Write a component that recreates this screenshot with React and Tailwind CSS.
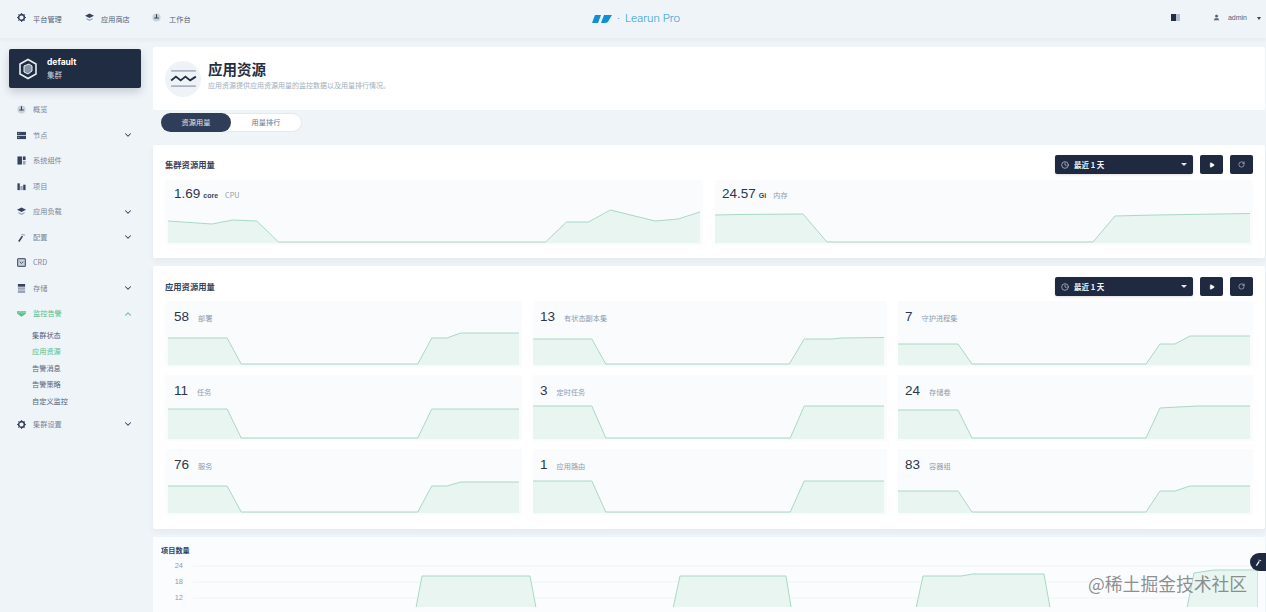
import { ChevronDown, ChevronUp, Clock, Play, RotateCw, User } from 'lucide-react';

const CJK = { fontFamily: '"Noto Sans CJK SC", "Liberation Sans", sans-serif' };
const DARK = '#36435c';

// the product's small duotone icons, 10x10
const Gear = ({ c = DARK }) => (
  <svg viewBox="0 0 10 10" className="w-[9px] h-[9px]" fill="none">
    <circle cx="5" cy="5" r="3.2" stroke={c} strokeWidth="1.8" />
    <path d="M5 0v1.5M5 8.5V10M0 5h1.5M8.5 5H10M1.5 1.5l1 1M7.5 7.5l1 1M8.5 1.5l-1 1M2.5 7.5l-1 1" stroke={c} strokeWidth="1" />
  </svg>
);
const Dial = () => (
  <svg viewBox="0 0 10 10" className="w-[9px] h-[9px]">
    <circle cx="5" cy="5" r="4.5" fill="#c9d1db" />
    <path d="M5 1.5v3.5M2.5 5.5h5" stroke={DARK} strokeWidth="1.2" />
  </svg>
);
const Cap = ({ c = DARK }) => (
  <svg viewBox="0 0 10 10" className="w-[9px] h-[9px]">
    <path d="M5 0.5L10 3 5 5.5 0 3z" fill={c} />
    <path d="M1.5 5.5L5 7.2l3.5-1.7V7L5 9 1.5 7z" fill="#9aa5b5" />
  </svg>
);
const Rows = () => (
  <svg viewBox="0 0 10 10" className="w-[9px] h-[9px]">
    <rect y="1" width="10" height="3.6" fill={DARK} />
    <rect y="5.4" width="10" height="3.6" fill={DARK} />
    <path d="M1.5 2.8h1M1.5 7.2h1" stroke="#fff" strokeWidth="0.8" />
  </svg>
);
const Blocks = () => (
  <svg viewBox="0 0 10 10" className="w-[9px] h-[9px]">
    <rect x="0.5" y="0.5" width="5" height="9" fill={DARK} />
    <rect x="6.5" y="0.5" width="3" height="4" fill={DARK} />
    <rect x="6.5" y="5.5" width="3" height="4" fill="#9aa5b5" />
  </svg>
);
const Bars = () => (
  <svg viewBox="0 0 10 10" className="w-[9px] h-[9px]">
    <rect x="0.5" y="1.5" width="2.6" height="7.5" fill={DARK} />
    <rect x="3.7" y="4.5" width="2.6" height="4.5" fill="#9aa5b5" />
    <rect x="6.9" y="3" width="2.6" height="6" fill={DARK} />
  </svg>
);
const Hammer = ({ c = DARK }) => (
  <svg viewBox="0 0 10 10" className="w-[9px] h-[9px]" fill="none">
    <path d="M6 3.5L2 9.5" stroke={c} strokeWidth="1.8" />
    <path d="M5 1.5l4 1" stroke="#9aa5b5" strokeWidth="1.4" />
  </svg>
);
const Crd = () => (
  <svg viewBox="0 0 10 10" className="w-[9px] h-[9px]" fill="none">
    <rect x="0.7" y="0.7" width="8.6" height="8.6" rx="1" stroke="#566176" strokeWidth="1.4" fill="#c9d1db" />
    <path d="M3 4l2 2 2-2" stroke={DARK} strokeWidth="1" />
  </svg>
);
const Stack = () => (
  <svg viewBox="0 0 10 10" className="w-[9px] h-[9px]">
    <rect x="1" y="0" width="8" height="3" fill={DARK} />
    <rect x="1" y="3.7" width="8" height="2.6" fill="#9aa5b5" />
    <rect x="1" y="7" width="8" height="3" fill="#9aa5b5" />
  </svg>
);
const Pulse = () => (
  <svg viewBox="0 0 10 10" className="w-[9px] h-[9px]">
    <path d="M0 2.5h10v2.5L5 8.5 0 5z" fill="#55bc8a" />
    <path d="M0 4.5h3l1-1.5 1.5 2.5L6.5 4H10" stroke="#c6ead8" strokeWidth="0.6" fill="none" />
  </svg>
);

const NAV = [
  { label: '概览', Icon: Dial },
  { label: '节点', Icon: Rows, arrow: true },
  { label: '系统组件', Icon: Blocks },
  { label: '项目', Icon: Bars },
  { label: '应用负载', Icon: Cap, arrow: true },
  { label: '配置', Icon: Hammer, arrow: true },
  { label: 'CRD', Icon: Crd },
  { label: '存储', Icon: Stack, arrow: true },
];

const SUB = ['集群状态', '应用资源', '告警消息', '告警策略', '自定义监控'];

const TILES = [
  { value: '58', label: '部署', pts: '0,8 59,8 73,34 249,34 263,8 278,8 292,3 350,3' },
  { value: '13', label: '有状态副本集', flush: true, pts: '0,9 59,9 73,34 257,34 272,9 300,9 310,8 352,7.5', vw: 352 },
  { value: '7', label: '守护进程集', flush: true, pts: '0,14 60,14 74,34 248,34 262,14 277,14 292,6 352,6', vw: 352 },
  { value: '11', label: '任务', pts: '0,5 59,5 73,34 249,34 263,5 350,5' },
  { value: '3', label: '定时任务', flush: true, pts: '0,2 59,2 73,34 258,34 272,2 352,2', vw: 352 },
  { value: '24', label: '存储卷', flush: true, pts: '0,6 60,6 74,34 248,34 262,4 280,3 300,2 352,2', vw: 352 },
  { value: '76', label: '服务', pts: '0,8 59,8 73,34 249,34 263,8 278,8 292,4 350,4' },
  { value: '1', label: '应用路由', flush: true, pts: '0,3 59,3 73,34 258,34 272,3 352,3', vw: 352 },
  { value: '83', label: '容器组', flush: true, pts: '0,13 60,13 74,34 248,34 262,13 277,13 292,8 352,8', vw: 352 },
];

function Spark({ pts, vw = 350 }) {
  return (
    <svg viewBox={`0 0 ${vw} 36`} preserveAspectRatio="none" className="w-full h-[36px] block">
      <polygon points={`0,35 ${pts} ${vw},35`} fill="#e9f5f0" />
      <polyline points={pts} fill="none" stroke="#abd8c3" strokeWidth="1" vectorEffect="non-scaling-stroke" />
    </svg>
  );
}

function Toolbar() {
  return (
    <div className="flex items-center gap-[7px] text-white">
      <div className="w-[138px] h-[19px] bg-[#1f2a40] rounded-[2px] flex items-center px-[6px] shadow-sm">
        <Clock className="w-[8px] h-[8px] text-gray-300" />
        <span className="ml-[5px] text-[7.5px] font-bold text-gray-100" style={CJK}>最近 1 天</span>
        <span className="ml-auto w-0 h-0 border-x-[3px] border-x-transparent border-t-[3px] border-t-gray-200" />
      </div>
      <div className="w-[23px] h-[19px] bg-[#1f2a40] rounded-[2px] flex items-center justify-center">
        <Play className="w-[6px] h-[6px] fill-white" />
      </div>
      <div className="w-[23px] h-[19px] bg-[#1f2a40] rounded-[2px] flex items-center justify-center">
        <RotateCw className="w-[7px] h-[7px] text-gray-300" />
      </div>
    </div>
  );
}

function Tile({ value, unit, label, pts, vw, small, flush }) {
  return (
    <div className={`bg-[#f9fbfd] ${flush ? 'pr-[3px]' : 'px-[3px]'} ${small ? 'h-[65px]' : 'h-[66px]'}`}>
      <div className={`flex items-baseline ${flush ? 'pl-[7px]' : 'pl-[6px]'} ${small ? 'h-[28px] pt-[5px]' : 'h-[29px] pt-[7px]'}`}>
        <span className="text-[13.5px] leading-[18px] text-[#2d3749]">{value}</span>
        {unit && <span className="ml-[3px] text-[7px] font-bold text-[#36435c]">{unit}</span>}
        <span className={`${unit ? 'ml-[7px]' : 'ml-[9px]'} text-[7.2px] text-[#8f9bad]`} style={CJK}>{label}</span>
      </div>
      <Spark pts={pts} vw={vw} />
    </div>
  );
}

export default function App() {
  return (
    <div className="relative w-[1266px] h-[612px] overflow-hidden bg-[#eff4f9] text-[#36435c]" style={{ fontFamily: '"Liberation Sans", sans-serif' }}>
      <header className="h-[38px] grid grid-cols-3 items-center bg-[#eff4f9] shadow-[0_2px_4px_rgba(36,46,66,0.05)]">
        <nav className="flex items-center pl-[17px] text-[7.2px] text-[#566176]" style={CJK}>
          <span className="flex items-center gap-[7px] w-[67px]"><span className="-mt-[2px] flex"><Gear /></span>平台管理</span>
          <span className="flex items-center gap-[7px] w-[67px] pl-[1px]"><span className="-mt-[2px] flex"><Cap /></span>应用商店</span>
          <span className="flex items-center gap-[8px] pl-[1px]"><span className="-mt-[2px] flex"><Dial /></span>工作台</span>
        </nav>
        <div className="flex items-center justify-center gap-[5px] pl-[6px]">
          <svg viewBox="0 0 20 8" className="w-[20px] h-[8px]">
            <path d="M3 0h6L6 8H0zM12 0h8l-3 5q-1 3-4 3H9z" fill="#0f8fd6" />
          </svg>
          <span className="text-[9px] leading-none text-[#2a9bd8]">·</span>
          <span className="text-[11.6px] text-[#2a9bd8]" style={{ fontFamily: 'Roboto, sans-serif', fontWeight: 300 }}>Learun Pro</span>
        </div>
        <div className="flex items-center justify-end pr-[5px] text-[7px] text-[#566176]">
          <svg viewBox="0 0 9 7" className="w-[9px] h-[7px] mr-[33px] -mt-[3px]">
            <rect width="5" height="7" fill="#242e42" />
            <rect x="5" width="4" height="7" fill="#b6bfcb" />
          </svg>
          <User className="w-[7px] h-[9px] mr-[8px] -mt-[3px] text-[#566176] fill-[#566176]" />
          <span className="-mt-[2px]">admin</span>
          <span className="ml-[10px] -mt-[2px] w-0 h-0 border-x-[2.5px] border-x-transparent border-t-[3px] border-t-[#36435c]" />
        </div>
      </header>

      <div className="flex">
        <aside className="w-[153px] shrink-0 pt-[11px]">
          <div className="mx-[9px] w-[132px] h-[39px] bg-[#202c42] rounded-[2px] flex items-center pl-[9px] shadow-[0_4px_8px_rgba(36,46,66,0.2)]">
            <svg viewBox="0 0 20 22" className="w-[20px] h-[22px]" fill="none">
              <path d="M10 1.5l8 4.5v10l-8 4.5-8-4.5V6z" stroke="#e8edf3" strokeWidth="1.6" />
              <path d="M6 8l5-2 3 2v5l-4 3-4-2z" fill="#8794a8" stroke="#e8edf3" strokeWidth="1" />
            </svg>
            <div className="ml-[9px]">
              <div className="text-[8.5px] leading-[12px] font-bold text-white" style={{ fontFamily: 'Inter, sans-serif' }}>default</div>
              <div className="text-[7.5px] leading-[13px] text-gray-300" style={CJK}>集群</div>
            </div>
          </div>

          <div className="mt-[9px] text-[7.2px] text-[#7a8598]" style={CJK}>
            {NAV.map(({ label, Icon, arrow }) => (
              <div key={label} className="h-[25.5px] flex items-center pl-[17px] pr-[20px]">
                <Icon />
                <span className="ml-[7px]">{label}</span>
                {arrow && <ChevronDown className="ml-auto w-[10px] h-[10px] text-[#36435c]" strokeWidth={2.5} />}
              </div>
            ))}
            <div className="h-[25.5px] flex items-center pl-[17px] pr-[20px] text-[#55bc8a]">
              <Pulse />
              <span className="ml-[7px]">监控告警</span>
              <ChevronUp className="ml-auto w-[10px] h-[10px]" strokeWidth={2.5} />
            </div>
            <div className="pl-[32px]">
              {SUB.map(s => (
                <div key={s} className={`h-[16.6px] leading-[16px] ${s === '应用资源' ? 'text-[#55bc8a]' : 'text-[#566176]'}`}>{s}</div>
              ))}
            </div>
            <div className="h-[25.5px] mt-[2px] flex items-center pl-[17px] pr-[20px]">
              <Gear />
              <span className="ml-[7px]">集群设置</span>
              <ChevronDown className="ml-auto w-[10px] h-[10px] text-[#36435c]" strokeWidth={2.5} />
            </div>
          </div>
        </aside>

        <main className="flex-1 min-w-0 pt-[9px] pr-[1px]">
          <section className="h-[63px] bg-white rounded-[2px] flex items-center pl-[12px]">
            <div className="w-[36px] h-[36px] rounded-full bg-[#eff3f7] flex items-center justify-center">
              <svg viewBox="0 0 28 20" className="w-[27px] h-[19px]" fill="none">
                <path d="M1 2h26M1 18h26" stroke="#a9b4c3" strokeWidth="2" />
                <path d="M1 12l5-4 5 4 5-4 5 4 6-4" stroke="#242e42" strokeWidth="2" />
              </svg>
            </div>
            <div className="ml-[7px] -mt-[7px]" style={CJK}>
              <h1 className="text-[14.5px] leading-[20px] font-bold text-[#242e42]">应用资源</h1>
              <p className="text-[7px] leading-[12px] text-[#a2adbc]">应用资源提供应用资源用量的监控数据以及用量排行情况。</p>
            </div>
          </section>

          <div className="mt-[3px] ml-[8px] w-[141px] h-[19px] bg-white border border-[#e3e9ef] rounded-full flex items-center text-[7.2px]" style={CJK}>
            <span className="w-[70px] h-[19px] -ml-px bg-[#2f3d58] rounded-full flex items-center justify-center text-gray-200">资源用量</span>
            <span className="flex-1 text-center text-[#6b7688]">用量排行</span>
          </div>

          <section className="mt-[13px] h-[113px] bg-white rounded-[2px] px-[12px] shadow-[0_3px_6px_rgba(36,46,66,0.05)]">
            <div className="h-[35px] pt-[4px] flex items-center justify-between">
              <h2 className="text-[8.3px] font-bold text-[#36435c]" style={CJK}>集群资源用量</h2>
              <Toolbar />
            </div>
            <div className="grid grid-cols-2 gap-[12px]">
              <Tile small value="1.69" unit="core" label="CPU" vw={534} pts="0,13 44,16 65,12 89,13 111,34 379,34 400,14 422,14 444,2 489,13 512,11 534,4" />
              <Tile small flush value="24.57" unit="Gi" label="内存" vw={535} pts="0,7 24,6.5 88,6 112,34 378,34 400,8 440,7 535,5.5" />
            </div>
          </section>

          <section className="mt-[8px] h-[263px] bg-white rounded-[2px] px-[12px] shadow-[0_3px_6px_rgba(36,46,66,0.05)]">
            <div className="h-[35px] pt-[6px] flex items-center justify-between">
              <h2 className="text-[8.3px] font-bold text-[#36435c]" style={CJK}>应用资源用量</h2>
              <Toolbar />
            </div>
            <div className="grid grid-cols-[357px_354px_355px] gap-x-[11px] gap-y-[8px]">
              {TILES.map(t => <Tile key={t.label} {...t} />)}
            </div>
          </section>

          <section className="mt-[8px] h-[80px] bg-[#fbfcfd] px-[8px] pt-[8px]">
            <h2 className="text-[7.2px] leading-[10px] font-bold text-[#36435c]" style={CJK}>项目数量</h2>
            <div className="flex mt-[2px]">
              <div className="w-[22px] shrink-0 pt-[1px] text-right text-[7.5px] leading-[16px] text-[#8f9bad]">
                <div>24</div>
                <div>18</div>
                <div>12</div>
              </div>
              <svg viewBox="0 0 1070 50" className="ml-[5px] w-[1070px] shrink-0 h-[50px] block" fill="none">
                <path d="M5 9h1065M5 25h1065M5 41h1065" stroke="#f0f3f6" />
                <path d="M227 56l7-37h108l7 37zM484 56l8-37h106l6 37zM727 56l8-37h38l12-2h71l7 39zM998 56l8-40 20-3h44v43z" fill="#e9f5f0" stroke="#abd8c3" />
              </svg>
            </div>
          </section>
        </main>
      </div>

      <div className="absolute right-0 top-[553px] w-[16px] h-[18px] bg-[#1f2a40] rounded-l-full flex items-center justify-center">
        <svg viewBox="0 0 10 10" className="w-[7px] h-[7px]" fill="none">
          <path d="M6 3.5L2 9.5" stroke="#fff" strokeWidth="1.8" />
          <path d="M5 1.5l4 1" stroke="#c9d1db" strokeWidth="1.4" />
        </svg>
      </div>
      <div className="absolute left-[1088px] top-[571px] text-[17.8px] leading-[24px] text-[#6f7276]/80 whitespace-nowrap" style={CJK}>@稀土掘金技术社区</div>
    </div>
  );
}
